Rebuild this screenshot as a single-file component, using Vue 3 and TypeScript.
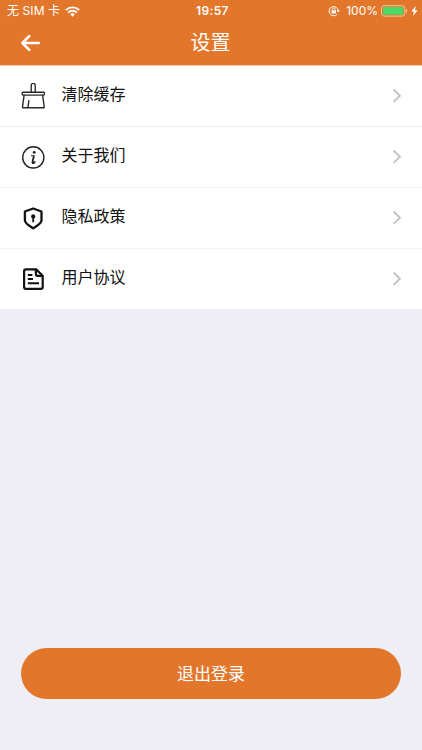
<script setup lang="ts">
type IconName = 'broom' | 'info' | 'shield' | 'document'

interface SettingItem {
  label: string
  icon: IconName
}

const items: SettingItem[] = [
  { label: '清除缓存', icon: 'broom' },
  { label: '关于我们', icon: 'info' },
  { label: '隐私政策', icon: 'shield' },
  { label: '用户协议', icon: 'document' },
]
</script>

<template>
  <div class="screen">
    <header class="header">
      <div class="status">
        <div class="status-left">
          <span class="carrier">无 SIM 卡</span>
          <svg class="wifi" width="15" height="11" viewBox="0 0 15 11" fill="none" stroke="#fff" stroke-width="1.9">
            <path d="M.8 4.1a9.5 9.5 0 0 1 13.4 0" />
            <path d="M3.1 6.6a6.2 6.2 0 0 1 8.8 0" />
            <path d="M7.5 10.8 5.2 8.5a3.2 3.2 0 0 1 4.6 0Z" fill="#fff" stroke="none" />
          </svg>
        </div>
        <span class="clock">19:57</span>
        <div class="status-right">
          <svg class="lock" width="12" height="12" viewBox="0 0 12 12" fill="none" stroke="#fff">
            <path d="M9.2 9.2a4.6 4.6 0 1 1 1.1-3.4" stroke-width="1" />
            <path d="M8.5 5.3h3.4l-1.7 2.2Z" fill="#fff" stroke="none" />
            <path d="M4.5 5.5V4.3a1.3 1.3 0 0 1 2.6 0v1.2" stroke-width=".8" />
            <rect x="3.6" y="5.2" width="4.4" height="3.2" rx=".4" fill="#fff" stroke="none" />
          </svg>
          <span class="percent">100%</span>
          <svg class="battery" width="27" height="12" viewBox="0 0 27 12">
            <rect x=".5" y=".7" width="23.4" height="10.4" rx="2.6" fill="none" stroke="#f6cfae" stroke-width=".9" />
            <rect x="2" y="2.1" width="20.4" height="7.6" rx="1.3" fill="#4cd964" />
            <path d="M25 4.1q1.3.5 1.3 1.8T25 7.7Z" fill="#f6cfae" />
          </svg>
          <svg class="bolt" width="7" height="10" viewBox="0 0 7 10" fill="#fff">
            <path d="M4.8 0 .3 5.6h2.6L2 10l4.7-5.8H4Z" />
          </svg>
        </div>
      </div>
      <div class="nav">
        <svg class="back" width="20" height="18" viewBox="0 0 20 18" fill="none" stroke="#fff" stroke-width="2.5" stroke-linecap="round" stroke-linejoin="round">
          <path d="M8.2 2.1 1.4 9l6.8 6.9M1.6 9h16.2" />
        </svg>
        <h1 class="title">设置</h1>
      </div>
    </header>

    <ul class="list">
      <li v-for="item in items" :key="item.icon" class="row">
        <svg v-if="item.icon === 'broom'" class="icon" viewBox="0 0 24 26" fill="none" stroke="#2b2b2b" stroke-width="1.4" stroke-linejoin="round">
          <path d="M10.2 9.3V2.4a2 2 0 0 1 4 0v6.9" />
          <rect x="1.2" y="9.3" width="22.3" height="2.8" rx="1" />
          <path d="M3.1 12.1 1.5 23.8q-.1 1 .8 1h20.1q.9 0 .8-1L21.6 12.1M7.9 17.6l-1 6.8" stroke-linecap="round" />
        </svg>
        <svg v-else-if="item.icon === 'info'" class="icon" viewBox="0 0 24 26" fill="none" stroke="#222">
          <circle cx="12.3" cy="13.4" r="10.6" stroke-width="1.4" />
          <circle cx="13.2" cy="8.3" r="1.4" fill="#222" stroke="none" />
          <path d="M10 11.7h1.8" stroke-width="1" />
          <path d="M13 11.3 11.6 17.6q-.3 1.7.6 1.5.9-.2 1.9-1.7" stroke-width="1.8" />
        </svg>
        <svg v-else-if="item.icon === 'shield'" class="icon" viewBox="0 0 24 26" fill="none" stroke="#111" stroke-linejoin="round">
          <path d="M12.2 3.5 3.9 6.5v8.9c0 2.8 4.7 5.5 8.3 8 3.6-2.5 8.3-5.2 8.3-8V6.5Z" stroke-width="2.3" />
          <circle cx="12.2" cy="11.4" r="2.1" fill="#111" stroke="none" />
          <path d="M12.2 11.4v5.8" stroke-width="1.8" />
        </svg>
        <svg v-else class="icon" viewBox="0 0 24 26" fill="none" stroke="#111" stroke-width="2.2" stroke-linejoin="round">
          <path d="M15.2 3.4H4.9q-1.8 0-1.8 1.8v15.8q0 1.8 1.8 1.8h15q1.8 0 1.8-1.8V9.8Z" />
          <path d="M14.9 3.6v4.5q0 1.8 1.8 1.8h4.8" />
          <path d="M6.8 9h4.6M6.8 13.1h5.2M6.8 17.3h11.2" stroke-width="2" />
        </svg>
        <span class="label">{{ item.label }}</span>
        <svg class="chevron" width="10" height="16" viewBox="0 0 10 16" fill="none" stroke="#c5c5c9" stroke-width="2">
          <path d="M1.6 1.5 7.9 7.7l-6.3 6.2" />
        </svg>
      </li>
    </ul>

    <button class="logout" type="button">退出登录</button>
  </div>
</template>

<style>
body {
  margin: 0;
}
</style>

<style scoped>
.screen {
  display: flex;
  flex-direction: column;
  box-sizing: border-box;
  height: 750px;
  padding-bottom: 51px;
  background: #efeef5;
  font-family: Inter, 'Noto Sans CJK SC', sans-serif;
}

.header {
  height: 66px;
  border-bottom: 1px solid #f3c9a8;
  box-sizing: border-box;
  background: #e2772c;
  color: #fff;
}

.status {
  display: grid;
  grid-template-columns: 1fr auto 1fr;
  align-items: center;
  height: 22px;
  padding: 0 4px 0 7px;
  font-size: 12px;
  line-height: 22px;
}

.status-left,
.status-right {
  display: flex;
  align-items: center;
}

.status-right {
  justify-content: flex-end;
}

.carrier {
  letter-spacing: 0.1px;
}

.wifi {
  margin-left: 5px;
}

.clock {
  font-weight: 600;
  letter-spacing: 0.35px;
}

.lock {
  margin-right: 6px;
}

.battery {
  margin: 0 3px 0 3px;
}

.nav {
  display: grid;
  grid-template-columns: 40px 1fr 40px;
  align-items: center;
  height: 42px;
}

.back {
  margin-left: 21px;
}

.title {
  margin: 0 1px 0 0;
  font-size: 20px;
  font-weight: 400;
  line-height: 40px;
  text-align: center;
}

.list {
  margin: 0;
  padding: 0;
  list-style: none;
  background: #fff;
}

.row {
  display: flex;
  align-items: center;
  box-sizing: border-box;
  height: 61px;
  padding: 0 20px 0 21px;
  border-bottom: 1px solid #f1f1f3;
}

.row:last-child {
  height: 60px;
  border-bottom: 0;
}

.icon {
  flex: none;
  width: 24px;
  height: 26px;
}

.label {
  flex: 1;
  margin-left: 16.5px;
  padding-bottom: 4px;
  color: #111;
  font-size: 16px;
  line-height: 24px;
}

.logout {
  height: 51px;
  margin: auto 21px 0;
  padding: 0 0 2px;
  border: 0;
  border-radius: 26px;
  background: #e2772c;
  color: #fff;
  font: inherit;
  font-size: 17px;
}
</style>
